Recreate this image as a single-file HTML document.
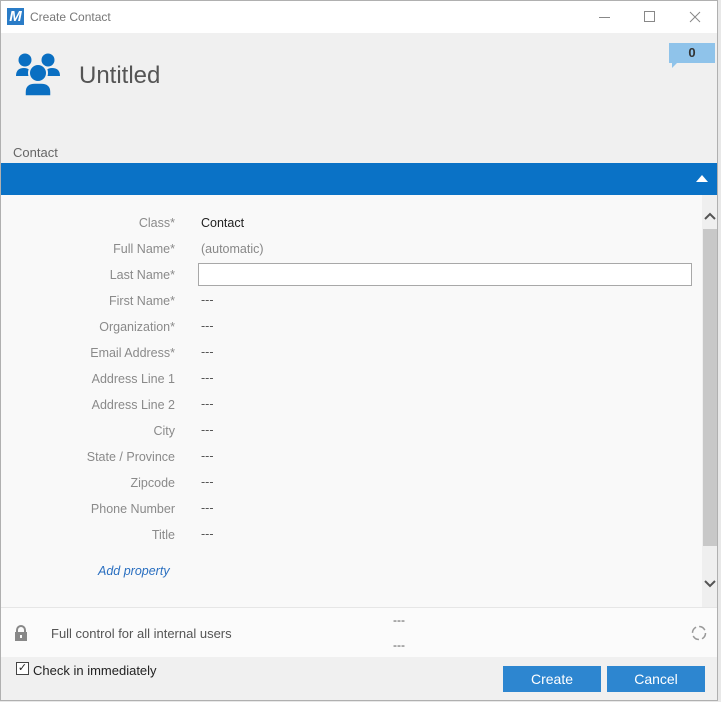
<!DOCTYPE html>
<html><head><meta charset="utf-8"><style>
*{margin:0;padding:0;box-sizing:border-box}
body{width:721px;height:702px;background:#e8e8e8;font-family:"Liberation Sans",sans-serif;position:relative;overflow:hidden}
.win{position:absolute;left:0;top:0;width:718px;height:701px;background:#f0f0f0;border:1px solid #b0b0b0}
.abs{position:absolute}
.lbl{position:absolute;right:542px;font-size:12.5px;color:#8a8a8a;text-align:right;white-space:nowrap}
.val{position:absolute;left:200px;font-size:12.5px;color:#555}
</style></head><body>
<div class="win">
 <div class="abs" style="left:0;top:0;width:716px;height:32px;background:#fff"></div>
 <div class="abs" style="left:6px;top:7px;width:17px;height:17px;background:#2a7cc7;color:#fff;font:bold italic 15px 'Liberation Sans';text-align:center;line-height:17px">M</div>
 <div class="abs" style="left:29px;top:9px;font-size:12px;color:#777">Create Contact</div>
 <div class="abs" style="left:598px;top:16px;width:11px;height:1px;background:#888"></div>
 <div class="abs" style="left:643px;top:10px;width:11px;height:11px;border:1px solid #888"></div>
 <svg class="abs" style="left:688px;top:10px" width="12" height="12"><path d="M1 1 L11 11 M11 1 L1 11" stroke="#888" stroke-width="1"/></svg>
 <svg class="abs" style="left:14px;top:50px" width="46" height="46" viewBox="14 50 46 46">
  <circle cx="24" cy="59" r="6.5" fill="#0a6fc2"/><circle cx="47" cy="59" r="6.5" fill="#0a6fc2"/>
  <path d="M15 75 q0-8 8-8 q7 0 8 8z M43 75 q1-8 8-8 q8 0 8 8z" fill="#0a6fc2"/>
  <circle cx="37" cy="72" r="9" fill="#0a6fc2" stroke="#f0f0f0" stroke-width="2"/>
  <path d="M24 95 v-4 q0-9 10-9 h6 q10 0 10 9 v4z" fill="#0a6fc2" stroke="#f0f0f0" stroke-width="1.5"/>
 </svg>
 <div class="abs" style="left:78px;top:61px;font-size:24px;color:#555">Untitled</div>
 <div class="abs" style="left:668px;top:42px;width:46px;height:20px;background:#8fc3ea;color:#333;font-size:13px;font-weight:bold;text-align:center;line-height:20px">0</div>
 <div class="abs" style="left:671px;top:61px;width:0;height:0;border-top:6px solid #8fc3ea;border-right:6px solid transparent"></div>
 <div class="abs" style="left:12px;top:144px;font-size:13px;color:#666">Contact</div>
 <div class="abs" style="left:0;top:162px;width:716px;height:32px;background:#0a72c6"></div>
 <div class="abs" style="left:695px;top:174px;width:0;height:0;border-left:6px solid transparent;border-right:6px solid transparent;border-bottom:7px solid #fff"></div>
 <div class="abs" style="left:0;top:194px;width:716px;height:412px;background:#f9f9f9"></div>
 <div class="abs" style="left:701px;top:194px;width:15px;height:412px;background:#efefef"></div>
 <div class="abs" style="left:702px;top:228px;width:14px;height:317px;background:#c8c8c8"></div>
 <svg class="abs" style="left:703px;top:578px" width="12" height="10"><path d="M1 2 L6 7 L11 2" fill="none" stroke="#555" stroke-width="2"/></svg>
 <svg class="abs" style="left:703px;top:210px" width="12" height="10"><path d="M1 8 L6 3 L11 8" fill="none" stroke="#555" stroke-width="2"/></svg>
 <div class="lbl" style="top:215px">Class*</div><div class="val" style="top:215px;color:#222">Contact</div>
 <div class="lbl" style="top:241px">Full Name*</div><div class="val" style="top:241px;color:#888">(automatic)</div>
 <div class="lbl" style="top:267px">Last Name*</div>
 <div class="abs" style="left:197px;top:262px;width:494px;height:23px;background:#fff;border:1px solid #a8a8a8"></div>
 <div class="lbl" style="top:293px">First Name*</div><div class="val" style="top:292px">---</div>
 <div class="lbl" style="top:319px">Organization*</div><div class="val" style="top:318px">---</div>
 <div class="lbl" style="top:345px">Email Address*</div><div class="val" style="top:344px">---</div>
 <div class="lbl" style="top:371px">Address Line 1</div><div class="val" style="top:370px">---</div>
 <div class="lbl" style="top:397px">Address Line 2</div><div class="val" style="top:396px">---</div>
 <div class="lbl" style="top:423px">City</div><div class="val" style="top:422px">---</div>
 <div class="lbl" style="top:449px">State / Province</div><div class="val" style="top:448px">---</div>
 <div class="lbl" style="top:475px">Zipcode</div><div class="val" style="top:474px">---</div>
 <div class="lbl" style="top:501px">Phone Number</div><div class="val" style="top:500px">---</div>
 <div class="lbl" style="top:527px">Title</div><div class="val" style="top:526px">---</div>
 <div class="abs" style="left:97px;top:563px;font-size:12.5px;color:#2a6fc0;font-style:italic">Add property</div>
 <div class="abs" style="left:0;top:606px;width:716px;height:50px;background:#fbfbfb;border-top:1px solid #e6e6e6"></div>
 <svg class="abs" style="left:13px;top:624px" width="14" height="16"><path d="M3 7 V5 a4 4 0 0 1 8 0 V7" fill="none" stroke="#888" stroke-width="2"/><rect x="1" y="7" width="12" height="9" fill="#888"/><rect x="6" y="10" width="2" height="3" fill="#fbfbfb"/></svg>
 <div class="abs" style="left:50px;top:625px;font-size:13px;color:#555">Full control for all internal users</div>
 <div class="abs" style="left:392px;top:612px;font-size:12px;color:#555">---</div>
 <div class="abs" style="left:392px;top:637px;font-size:12px;color:#555">---</div>
 <svg class="abs" style="left:689px;top:623px" width="18" height="18"><circle cx="9" cy="9" r="6.5" fill="none" stroke="#999" stroke-width="1.5" stroke-dasharray="7 3.2"/></svg>
 <div class="abs" style="left:15px;top:661px;width:13px;height:13px;border:1px solid #444;background:#fff;font-size:11px;line-height:11px;text-align:center;color:#222">✓</div>
 <div class="abs" style="left:32px;top:662px;font-size:13px;color:#222">Check in immediately</div>
 <div class="abs" style="left:502px;top:665px;width:98px;height:26px;background:#2d86d0;color:#fff;font-size:14px;text-align:center;line-height:26px">Create</div>
 <div class="abs" style="left:606px;top:665px;width:98px;height:26px;background:#2d86d0;color:#fff;font-size:14px;text-align:center;line-height:26px">Cancel</div>
</div>
</body></html>
